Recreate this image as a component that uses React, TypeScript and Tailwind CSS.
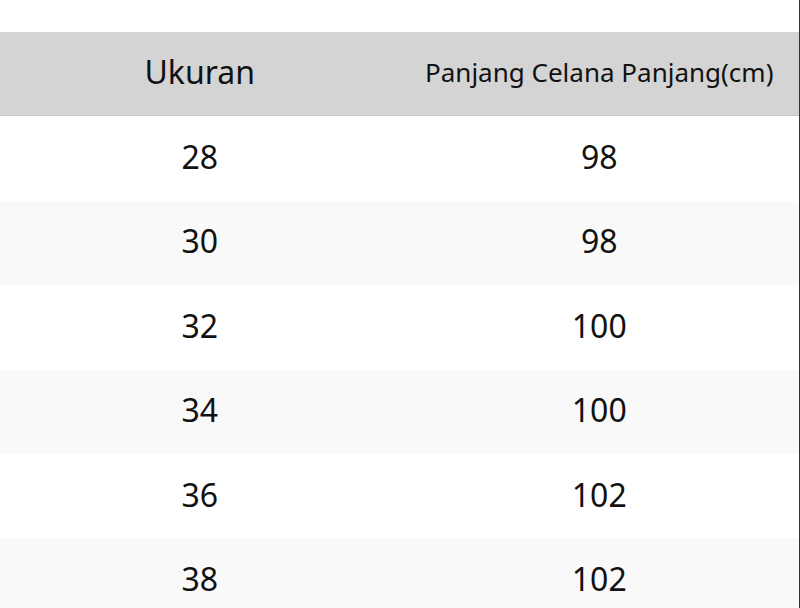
import React from 'react';

const rows = [
  { size: '28', length: '98' },
  { size: '30', length: '98' },
  { size: '32', length: '100' },
  { size: '34', length: '100' },
  { size: '36', length: '102' },
  { size: '38', length: '102' },
];

export default function App() {
  return (
    <div
      className="w-[800px] h-[608px] overflow-hidden bg-white text-[#111] border-r border-[#333]"
      style={{ fontFamily: '"Noto Sans", "Open Sans", sans-serif' }}
    >
      <div className="h-[32px]" />
      {/* Header */}
      <div className="grid grid-cols-2 h-[84.4px] bg-[#d4d4d4] border-b border-[#c4c4c4]">
        <div className="flex items-center justify-center pb-[3px] text-[32px]">Ukuran</div>
        <div className="flex items-center justify-center pb-[3px] text-[26px]">Panjang Celana Panjang(cm)</div>
      </div>
      {rows.map((r, i) => (
        <div
          key={r.size}
          className={`grid grid-cols-2 h-[84.4px] ${i % 2 === 1 ? 'bg-[#f9f9f9]' : 'bg-white'}`}
        >
          <div className="flex items-center justify-center pb-[3px] text-[32px]">{r.size}</div>
          <div className="flex items-center justify-center pb-[3px] text-[32px]">{r.length}</div>
        </div>
      ))}
    </div>
  );
}
